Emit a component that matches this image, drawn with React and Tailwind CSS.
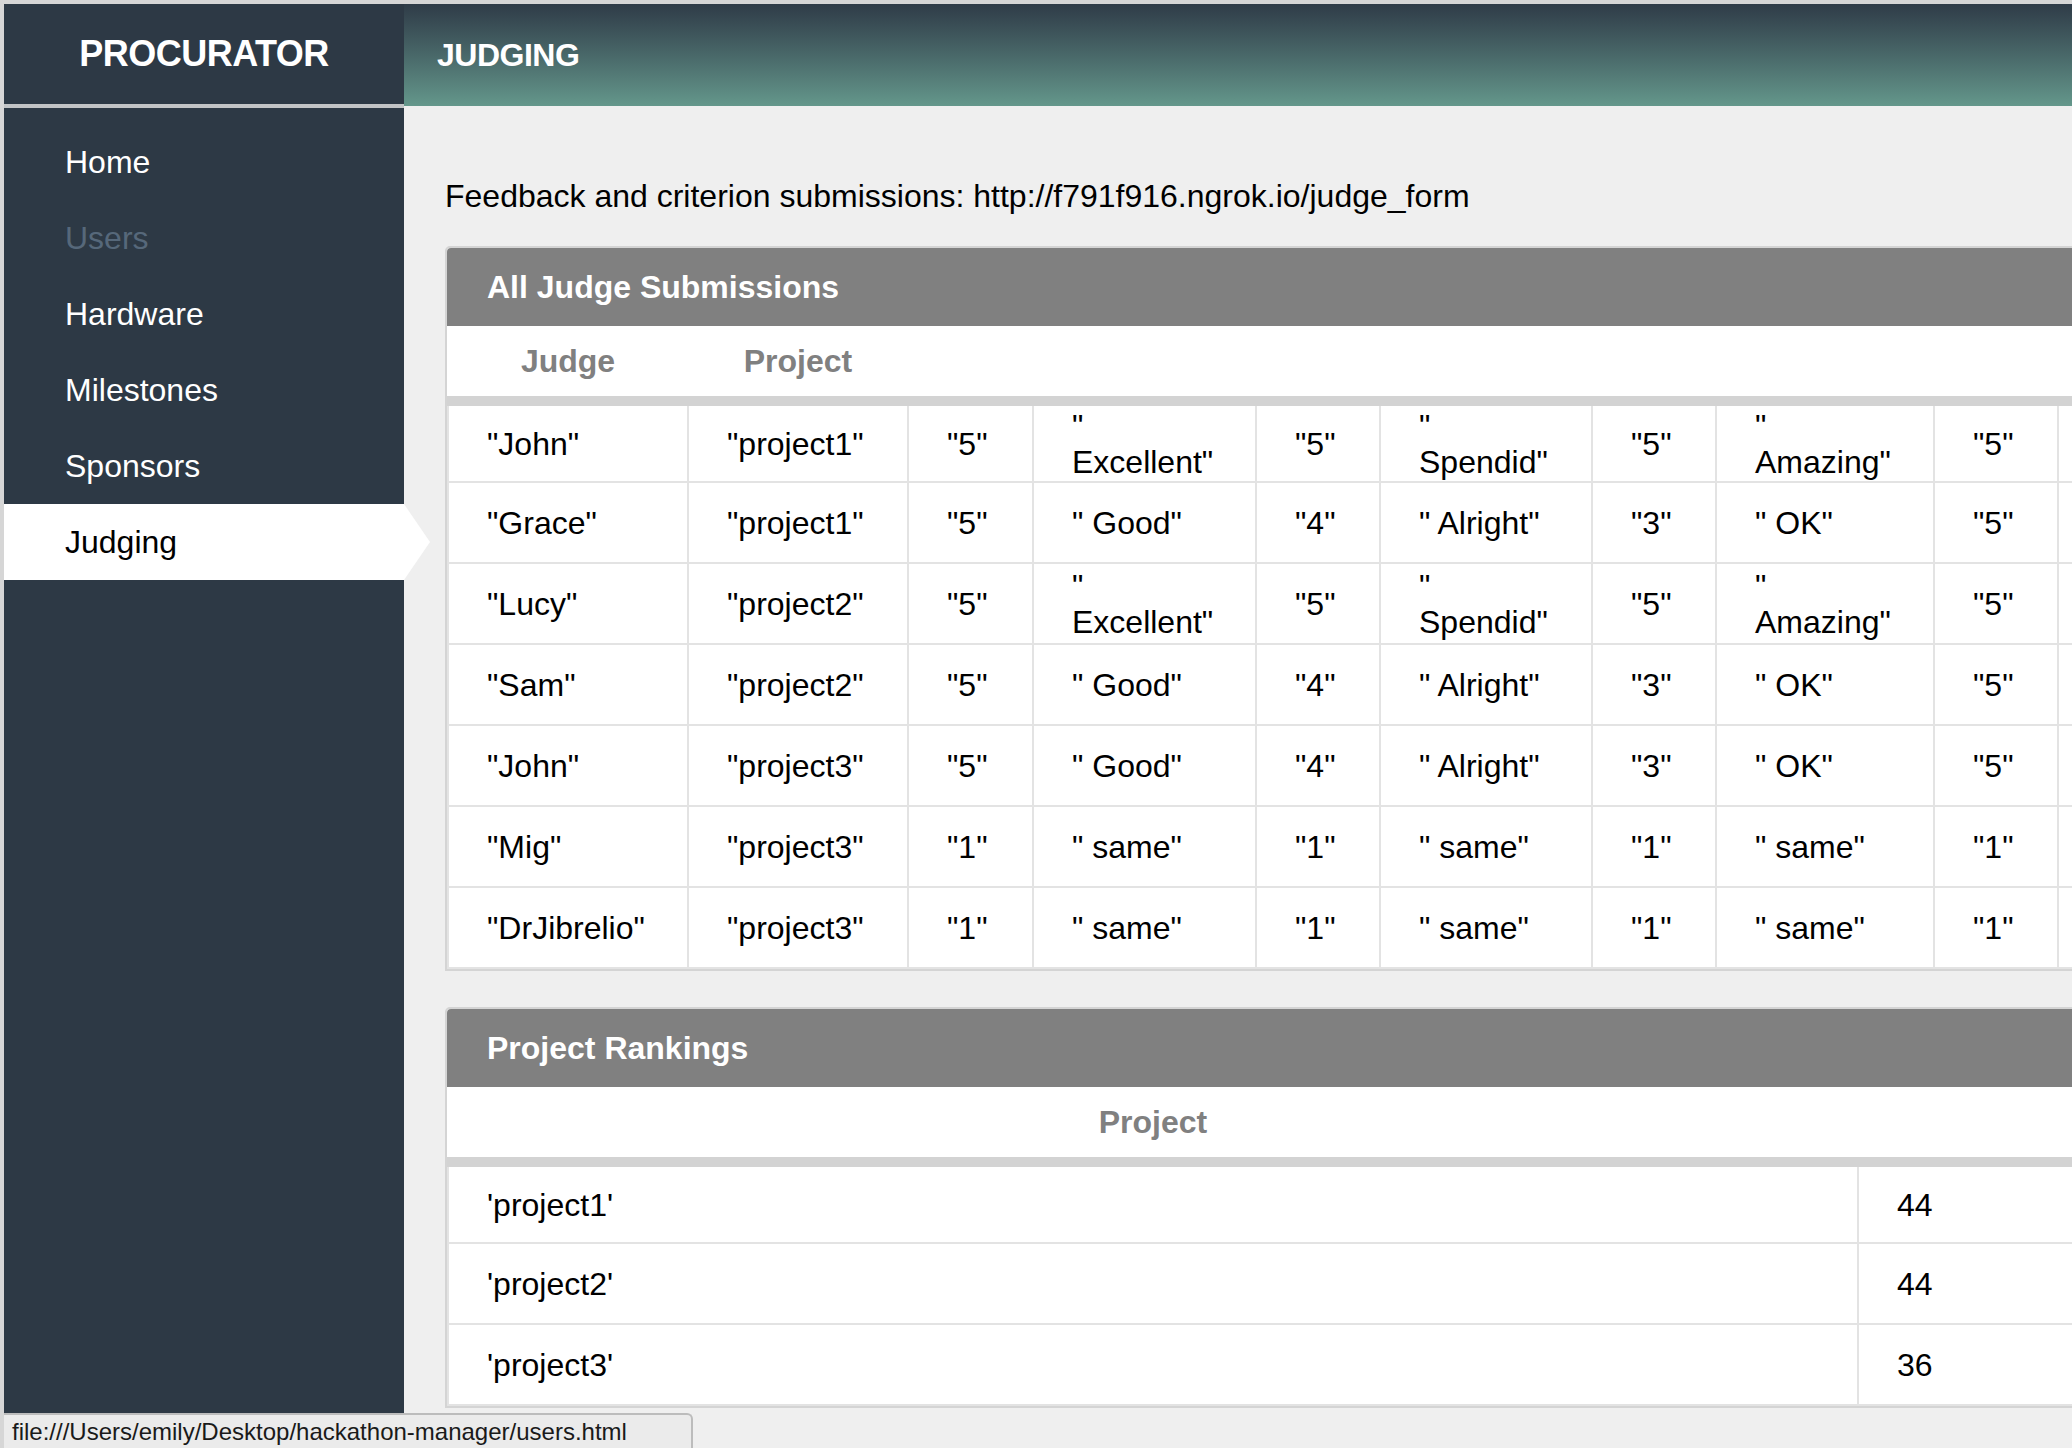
import React from "react";

const navItems = ["Home", "Users", "Hardware", "Milestones", "Sponsors", "Judging"];

// each row: judge, project, then score / feedback pairs
const submissions = [
  ["John", "project1", "5", " Excellent", "5", " Spendid", "5", " Amazing", "5"],
  ["Grace", "project1", "5", " Good", "4", " Alright", "3", " OK", "5"],
  ["Lucy", "project2", "5", " Excellent", "5", " Spendid", "5", " Amazing", "5"],
  ["Sam", "project2", "5", " Good", "4", " Alright", "3", " OK", "5"],
  ["John", "project3", "5", " Good", "4", " Alright", "3", " OK", "5"],
  ["Mig", "project3", "1", " same", "1", " same", "1", " same", "1"],
  ["DrJibrelio", "project3", "1", " same", "1", " same", "1", " same", "1"],
];

const rankings = [
  ["project1", 44],
  ["project2", 44],
  ["project3", 36],
];

const Sidebar = () => {
  return (
    <aside className="w-[400px] shrink-0 h-full bg-[#2d3945] flex flex-col">
      <div className="h-[100px] flex items-center justify-center">
        <span className="text-[36px] font-bold text-white tracking-[-0.5px]">PROCURATOR</span>
      </div>
      <div className="h-[4px] bg-[#c2c4c6]" />
      <ul className="pt-[16px]">
        {navItems.map((item) => {
          const active = item === "Judging";
          const muted = item === "Users";
          return (
            <li
              key={item}
              className={
                active
                  ? "relative h-[76px] flex items-center pl-[61px] bg-white text-black"
                  : muted
                  ? "h-[76px] flex items-center pl-[61px] text-[#56687a]"
                  : "h-[76px] flex items-center pl-[61px] text-white"
              }
            >
              <span className="text-[32px]">{item}</span>
              {active && (
                <div className="absolute left-full top-0 w-0 h-0 border-y-[38px] border-y-transparent border-l-[26px] border-l-white" />
              )}
            </li>
          );
        })}
      </ul>
    </aside>
  );
};

const PanelHeader = ({ title }) => (
  <div className="h-[78px] bg-[#808080] rounded-t-[4px] flex items-center pl-[40px]">
    <h3 className="text-[32px] font-bold text-white">{title}</h3>
  </div>
);

const cellCls = "border-2 border-[#e3e3e3] pl-[38px] pr-[38px] align-middle text-black";
const thCls = "font-bold text-[#808080] text-center border-b-[10px] border-[#d3d3d3]";

const App = () => {
  return (
    <div
      className="relative w-[2072px] h-[1448px] overflow-hidden bg-[#d6d6d6] pt-[4px] pl-[4px] flex"
      style={{ fontFamily: '"Liberation Sans", Arial, Helvetica, sans-serif' }}
    >
      <Sidebar />

      <main className="flex-1 min-w-0 h-full flex flex-col bg-[#efefef] overflow-hidden">
        <header className="h-[102px] shrink-0 bg-linear-to-b from-[#2f3c48] to-[#64978b] flex items-center pl-[33px]">
          <h1 className="text-[32px] font-bold text-white tracking-[-0.5px]">JUDGING</h1>
        </header>

        <div className="pl-[41px] pt-[72px]">
          <p className="text-[32px] leading-[36px] text-black">
            Feedback and criterion submissions: http://f791f916.ngrok.io/judge_form
          </p>

          {/* judge submissions */}
          <section className="mt-[32px] w-[2000px] border-2 border-[#d4d4d4] rounded-t-[5px] bg-white">
            <PanelHeader title="All Judge Submissions" />
            <table className="w-full table-fixed border-collapse text-[32px] leading-[36px]">
              <colgroup>
                <col className="w-[240px]" />
                <col className="w-[220px]" />
                <col className="w-[125px]" />
                <col className="w-[223px]" />
                <col className="w-[124px]" />
                <col className="w-[212px]" />
                <col className="w-[124px]" />
                <col className="w-[218px]" />
                <col className="w-[124px]" />
                <col />
              </colgroup>
              <thead>
                <tr className="h-[75px]">
                  <th className={thCls}>Judge</th>
                  <th className={thCls}>Project</th>
                  {Array.from({ length: 8 }).map((_, i) => (
                    <th key={i} className={thCls} />
                  ))}
                </tr>
              </thead>
              <tbody>
                {submissions.map((row, r) => (
                  <tr key={r} className="h-[81px]">
                    {row.map((val, c) => (
                      <td key={c} className={cellCls}>
                        {`"${val}"`}
                      </td>
                    ))}
                    <td className={cellCls} />
                  </tr>
                ))}
              </tbody>
            </table>
          </section>

          {/* rankings */}
          <section className="mt-[36px] w-[2000px] border-2 border-[#d4d4d4] rounded-t-[5px] bg-white">
            <PanelHeader title="Project Rankings" />
            <table className="w-full table-fixed border-collapse text-[32px] leading-[36px]">
              <colgroup>
                <col className="w-[1410px]" />
                <col />
              </colgroup>
              <thead>
                <tr className="h-[75px]">
                  <th className={thCls}>Project</th>
                  <th className={thCls} />
                </tr>
              </thead>
              <tbody>
                {rankings.map(([name, score]) => (
                  <tr key={name} className="h-[81px]">
                    <td className={cellCls}>{`'${name}'`}</td>
                    <td className={cellCls}>{score}</td>
                  </tr>
                ))}
              </tbody>
            </table>
          </section>
        </div>
      </main>

      {/* browser status bubble */}
      <div className="absolute left-[4px] bottom-0 w-[689px] h-[35px] bg-[#ebebeb] border-t-2 border-r-2 border-[#bcbcbc] rounded-tr-[6px] flex items-center pl-[8px]">
        <span className="text-[24px] text-[#1a1a1a] whitespace-nowrap">
          file:///Users/emily/Desktop/hackathon-manager/users.html
        </span>
      </div>
    </div>
  );
};

export default App;
